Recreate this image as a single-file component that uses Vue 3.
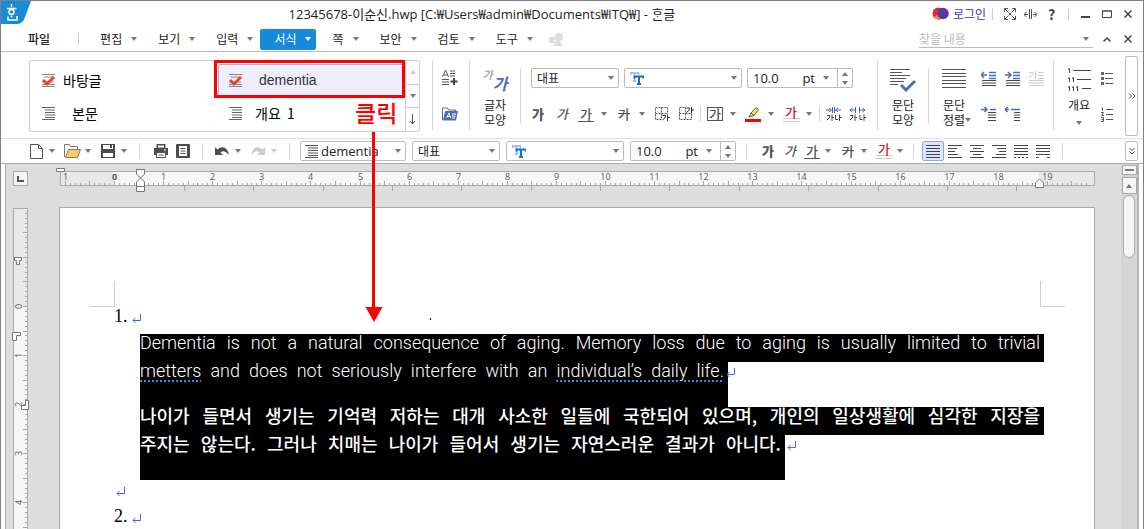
<script setup>

import { ref } from 'vue'

const keyword = ref('')
const fontSize = ref('10.0')

const menus = [
  { name: '편집' },
  { name: '보기' },
  { name: '입력' },
  { name: '서식', active: true },
  { name: '쪽' },
  { name: '보안' },
  { name: '검토' },
  { name: '도구' }
]

const styles = [
  { name: '바탕글', icon: 'check' },
  { name: 'dementia', icon: 'check', indent: 'deep', selected: true },
  { name: '본문', icon: 'lines', indent: 'deep' },
  { name: '개요  1', icon: 'lines', indent: 'slight' }
]

const aligns = [
  { name: '양쪽 정렬', d: 'M0 .5h14M0 3.5h14M0 6.5h14M0 9.5h14M0 12.5h14', active: true },
  { name: '왼쪽 정렬', d: 'M0 .5h14M0 3.5h9M0 6.5h7M0 9.5h10M0 12.5h14' },
  { name: '가운데 정렬', d: 'M0 .5h14M3 3.5h8M0 6.5h14M3 9.5h8M0 12.5h14' },
  { name: '오른쪽 정렬', d: 'M0 .5h14M5 3.5h9M7 6.5h7M4 9.5h10M0 12.5h14' },
  { name: '배분 정렬', d: 'M0 .5h14M0 3.5h14M0 6.5h14M0 9.5h14M0 12.5h2M4 12.5h2M8 12.5h2M12 12.5h2' },
  { name: '나눔 정렬', d: 'M0 .5h14M0 3.5h14M0 6.5h14M0 9.5h14M0 12.5h3M11 12.5h3' }
]

// ruler scale: one centimetre is 49.1px, ten ticks each
const CM = 49.1
const makeTicks = (from, to, zero) => {
  const list = []
  for (let i = from; i <= to; i++) {
    list.push({
      pos: Math.round(zero + i * CM / 10) + 0.5,
      size: i % 5 === 0 ? 4 : 2,
      label: i % 10 === 0 ? Math.abs(i / 10) : null
    })
  }
  return list
}

const hTicks = makeTicks(-10, 198, 53)
const vTicks = makeTicks(-19, 46, 97)
const tabStops = Array.from({ length: 13 }, (_, i) => Math.round(123 + i * 69.35) + 0.5)

</script>

<template>
  <div class="window">
    <header class="titlebar">
      <svg class="logo" width="31" height="23" viewBox="0 0 31 23">
        <path d="M0 0h30l-6 16q-2 7-8 7H0z" fill="#188bd8" />
        <path d="M10.500 3v3M6 7.500h9.500M7 15.500v3.500h9v-4" fill="none" stroke="#fff" stroke-width="1.500" />
        <circle cx="10.500" cy="11" r="2.500" fill="none" stroke="#fff" stroke-width="1.500" />
        <circle cx="10.500" cy="15.500" r="1" fill="#fff" />
      </svg>
      <h1 class="title">12345678-이순신.hwp [C:₩Users₩admin₩Documents₩ITQ₩] - ᄒᆞᆫ글</h1>
      <a class="login" href="#">
        <svg width="17" height="14" viewBox="0 0 17 14">
          <circle cx="6.500" cy="6.500" r="6" fill="#e8263c" />
          <path d="M2 10q3 4 8 2l-2-6z" fill="#f78c1e" />
          <circle cx="11" cy="6.500" r="5.800" fill="#5a35a8" />
        </svg>
        로그인
      </a>
      <span class="vline"></span>
      <button class="wbtn" aria-label="전체 화면">
        <svg width="12" height="12" viewBox="0 0 12 12" fill="none" stroke="#555">
          <path d="M.5 4V.5H4M8 .5h3.500V4M11.500 8v3.500H8M4 11.500H.5V8M1 1l3.500 3.500M11 1L7.500 4.500M1 11l3.500-3.500M11 11L7.500 7.500M5 5l2 2M7 5L5 7" />
        </svg>
      </button>
      <button class="wbtn" aria-label="창 맞춤">
        <svg width="13" height="10" viewBox="0 0 13 10" fill="none" stroke="#555">
          <path d="M5.500 0v10M7.500 0v10M0 5.500h4M9 5.500h4M2.500 3L0 5.500 2.500 8M10.500 3L13 5.500 10.500 8" />
        </svg>
      </button>
      <button class="wbtn help">?</button>
      <span class="vline"></span>
      <button class="wbtn" aria-label="최소화">
        <svg width="10" height="10" viewBox="0 0 10 10"><path d="M0 7h9v2H0z" fill="#444" /></svg>
      </button>
      <button class="wbtn" aria-label="최대화">
        <svg width="10" height="8" viewBox="0 0 10 8"><path d="M.5 1h9v6.500h-9zM0 1h10" fill="none" stroke="#444" /></svg>
      </button>
      <button class="wbtn" aria-label="닫기">
        <svg width="8" height="8" viewBox="0 0 8 8"><path d="M.5 .5l7 7M7.500 .5l-7 7" stroke="#444" stroke-width="1.500" /></svg>
      </button>
    </header>

    <nav class="menubar">
      <button class="file">파일</button>
      <span class="vline"></span>
      <button v-for="m in menus" :key="m.name" class="menu" :class="{ active: m.active }">
        {{ m.name }}<i class="arrow"></i>
      </button>
      <svg class="shapes" width="15" height="13" viewBox="0 0 15 13" fill="#ddd">
        <path d="M0 4h6v6H0zM9 5l5 8H4z" />
        <circle cx="10" cy="4" r="4" />
      </svg>
      <div class="search">
        <input v-model="keyword" type="text" placeholder="찾을 내용" aria-label="찾을 내용" />
        <i class="arrow"></i>
      </div>
      <button class="wbtn" aria-label="리본 접기">
        <svg width="8" height="5" viewBox="0 0 8 5"><path d="M.5 4.500L4 1l3.500 3.500" fill="none" stroke="#444" stroke-width="1.500" /></svg>
      </button>
      <button class="wbtn" aria-label="문서 닫기">
        <svg width="8" height="8" viewBox="0 0 8 8"><path d="M.5 .5l7 7M7.500 .5l-7 7" stroke="#444" stroke-width="1.500" /></svg>
      </button>
    </nav>

    <section class="ribbon">
      <div class="gallery">
        <div class="gallery-list">
          <button v-for="s in styles" :key="s.name" class="style" :class="{ selected: s.selected }">
            <svg width="13" height="13" viewBox="0 0 13 13">
              <path v-if="s.icon === 'lines'" d="M0 .5h13M3 3h10M3 5.500h10M3 8h10M3 10.500h10M0 12.500h13" stroke="#666" />
              <template v-else>
                <path d="M0 .5h13M2 3h10M0 8h12M0 12.500h13M0 10.500h13" stroke="#888" />
                <path d="M1 6l4 4 7-7" fill="none" stroke="#e2491f" stroke-width="3" />
              </template>
            </svg>
            <span class="style-name" :class="s.indent">{{ s.name }}</span>
          </button>
        </div>
        <div class="gallery-scroll">
          <button aria-label="위로"><i class="arrow up dim"></i></button>
          <button aria-label="아래로"><i class="arrow"></i></button>
          <button aria-label="더 보기">
            <svg width="7" height="11" viewBox="0 0 7 11"><path d="M3.500 0v10M1 7l2.500 3L6 7" fill="none" stroke="#555" /></svg>
          </button>
        </div>
      </div>

      <span class="sep"></span>
      <div class="pair">
        <button class="tool" aria-label="스타일 추가">
          <svg width="17" height="16" viewBox="0 0 17 16">
            <path d="M.5 7l3-7 3 7M1.500 5h4M8 1h5M8 3.500h5M8 6h5M0 9.500h7M0 12h7M0 14.500h7" fill="none" stroke="#555" />
            <path d="M12 8v7M8.500 11.500h7" stroke="#444" stroke-width="2" />
          </svg>
        </button>
        <button class="tool" aria-label="스타일 불러오기">
          <svg width="17" height="14" viewBox="0 0 17 14">
            <path d="M.5 13V1h5l1 2h7v3" fill="none" stroke="#666" />
            <path d="M3 4h13l-2 9.500H1z" fill="#4a6fb5" />
            <path d="M4.500 11L7 6l1.500 5M5 9.500h3M10 7h4M10 9h3.500M10 11h3" fill="none" stroke="#fff" />
          </svg>
        </button>
      </div>

      <span class="sep"></span>
      <button class="big">
        <span class="ga"><i class="back">가</i><i class="front">가</i></span>
        <span>글자<br />모양</span>
      </button>

      <span class="sep short"></span>
      <div class="form">
        <div class="form-row boxes">
          <label class="combo lang">
            <select aria-label="언어"><option>대표</option></select>
            <i class="arrow"></i>
          </label>
          <label class="combo font">
            <svg width="14" height="13" viewBox="0 0 14 13">
              <path d="M.5 3V1h8v2M4.500 1v8M3 9h3" fill="none" stroke="#8ab8e6" stroke-width="1.500" />
              <path d="M4.500 6.500V4.500h9v2M9 4v8M7 12h4" fill="none" stroke="#1a6fc4" stroke-width="2" />
            </svg>
            <select aria-label="글꼴"><option></option></select>
            <i class="arrow"></i>
          </label>
          <div class="combo size">
            <input v-model="fontSize" type="text" aria-label="글자 크기" />
            <span>pt</span>
            <i class="arrow"></i>
            <span class="spin">
              <button aria-label="크게"><i class="arrow up"></i></button>
              <button aria-label="작게"><i class="arrow"></i></button>
            </span>
          </div>
        </div>
        <div class="form-row glyphs">
          <button class="tool g bold">가</button>
          <button class="tool g italic">가</button>
          <button class="tool g"><u>가</u></button>
          <button class="drop" aria-label="밑줄 모양"><i class="arrow"></i></button>
          <button class="tool g"><s>가</s></button>
          <button class="drop" aria-label="취소선 모양"><i class="arrow"></i></button>
          <button class="tool" aria-label="아래 첨자">
            <svg width="15" height="14" viewBox="0 0 15 14">
              <path d="M.5 .5h12v12H.5zM6.500 .5v12M.5 6.500h12" fill="none" stroke="#555" stroke-dasharray="2 1" />
              <path d="M7 7h8v7H7z" fill="#fff" />
              <path d="M7.500 8.500h3q0 3-3 4.500M12.500 7.500V14M12.500 10.500H15" fill="none" stroke="#333" />
            </svg>
          </button>
          <button class="tool" aria-label="위 첨자">
            <svg width="15" height="14" viewBox="0 0 15 14">
              <path d="M.5 .5h12v12H.5zM6.500 .5v12M.5 6.500h12" fill="none" stroke="#555" stroke-dasharray="2 1" />
              <path d="M7 0h8v6H7z" fill="#fff" />
              <path d="M7.500 1h3q0 3-3 4.500M12.500 0v6M12.500 3H15" fill="none" stroke="#333" />
            </svg>
          </button>
          <span class="mini"></span>
          <button class="tool g"><span class="boxed">가</span></button>
          <button class="drop" aria-label="글자 테두리"><i class="arrow"></i></button>
          <button class="tool" aria-label="형광펜">
            <svg width="16" height="15" viewBox="0 0 16 15">
              <path d="M6 6l5-5.500 2.500 2L9 8.500zM6 6l-2 4 5-1.500" fill="#ffe94d" stroke="#555" />
              <path d="M0 12h16v3H0z" fill="#f00" />
            </svg>
          </button>
          <button class="drop" aria-label="형광펜 색"><i class="arrow"></i></button>
          <button class="tool g"><span class="color">가</span></button>
          <button class="drop" aria-label="글자 색"><i class="arrow"></i></button>
          <span class="mini"></span>
          <button class="tool" aria-label="자간 줄이기">
            <svg width="16" height="14" viewBox="0 0 16 14">
              <path d="M6.500 0v6M8.500 0v6M0 3h5M10 3h5M3 1l2.500 2L3 5M12 1L9.500 3 12 5" fill="none" stroke="#3f66b0" />
              <path d="M1 8.500h3q0 3-3 4.500M6 7.500V14M6 10.500h2M9.500 8v4.500H12M13.500 7.500V14M13.500 10.500h2" fill="none" stroke="#444" />
            </svg>
          </button>
          <button class="tool" aria-label="자간 늘리기">
            <svg width="16" height="14" viewBox="0 0 16 14">
              <path d="M5.500 0v6M9.500 0v6M0 3h5M10 3h5M2.500 1L0 3l2.500 2M12.500 1L15 3l-2.500 2" fill="none" stroke="#3f66b0" />
              <path d="M0 8.500h3q0 3-3 4.500M5 7.500V14M5 10.500h2M10 8v4.500h2.500M14 7.500V14M14 10.500h2" fill="none" stroke="#444" />
            </svg>
          </button>
        </div>
      </div>

      <span class="sep"></span>
      <button class="big">
        <svg width="27" height="26" viewBox="0 0 27 26">
          <path d="M0 1.500h20M0 4.500h12M0 7.500h20M0 10.500h16M0 13.500h14M0 16.500h8" stroke="#555" />
          <path d="M11 17l5 5 9-9" fill="none" stroke="#4a6fb5" stroke-width="3" />
        </svg>
        <span>문단<br />모양</span>
      </button>

      <span class="sep short"></span>
      <button class="big">
        <svg width="24" height="26" viewBox="0 0 24 26">
          <path d="M0 1.500h24M0 5.500h24M0 8.500h24M0 12.500h24M0 15.500h24M0 19.500h24" stroke="#555" />
        </svg>
        <span>문단<br />정렬<i class="arrow"></i></span>
      </button>
      <div class="indents">
        <button class="tool" aria-label="왼쪽 여백 줄이기">
          <svg width="15" height="15" viewBox="0 0 15 15">
            <path d="M8 1.500h7M8 4.500h7M8 7.500h7M0 4h6M3 1L0 4l3 3" fill="none" stroke="#4a6fb5" stroke-width="1.500" />
            <path d="M1 9.500h14M1 12h14M1 14.500h14" stroke="#444" />
          </svg>
        </button>
        <button class="tool" aria-label="왼쪽 여백 늘리기">
          <svg width="15" height="15" viewBox="0 0 15 15">
            <path d="M8 1.500h7M8 4.500h7M8 7.500h7M0 4h6M3 1l3 3-3 3" fill="none" stroke="#4a6fb5" stroke-width="1.500" />
            <path d="M1 9.500h14M1 12h14M1 14.500h14" stroke="#444" />
          </svg>
        </button>
        <button class="tool" aria-label="문단 첫 글자 장식">
          <svg width="15" height="15" viewBox="0 0 15 15">
            <path d="M0 1.500h4q0 3-4 5.500M6.500 0v8M6.500 4H8M9 1.500h6M9 4.500h6M9 7.500h6M0 9.500h15M0 12h15M0 14.500h15" fill="none" stroke="#ccc" />
          </svg>
        </button>
        <button class="tool" aria-label="첫 줄 들여쓰기">
          <svg width="15" height="15" viewBox="0 0 15 15">
            <path d="M9 2.500h6M0 2.500h6M3.500 0L6 2.500 3.500 5" fill="none" stroke="#4a6fb5" stroke-width="1.500" />
            <path d="M7 5.500h8M7 8h8M7 10.500h8M7 13.500h8" stroke="#444" />
          </svg>
        </button>
        <button class="tool" aria-label="첫 줄 내어쓰기">
          <svg width="15" height="15" viewBox="0 0 15 15">
            <path d="M6 2.500h9M0 2.500h4M2.500 0L0 2.500 2.500 5" fill="none" stroke="#4a6fb5" stroke-width="1.500" />
            <path d="M9 5.500h6M9 8h6M9 10.500h6M9 13.500h6" stroke="#444" />
          </svg>
        </button>
      </div>

      <span class="sep"></span>
      <button class="big outline">
        <svg width="23" height="26" viewBox="0 0 23 26" fill="none" stroke="#444">
          <path d="M5 2.500h18M9 11.500h14M14 20.500h9M0 1.500l1.500-1V5M0 10.500l1.500-1V14M4 10.500l1.500-1V14M0 19.500l1.500-1V23M4 19.500l1.500-1V23M8 19.500l1.500-1V23" />
        </svg>
        <span>개요</span>
        <i class="arrow"></i>
      </button>
      <div class="pair bullets">
        <button class="tool" aria-label="글머리표">
          <svg width="12" height="13" viewBox="0 0 12 13">
            <path d="M0 0h3v3H0zM0 5h3v3H0zM0 10h3v3H0z" fill="#666" />
            <path d="M4 1.500h8M4 6.500h8M4 11.500h8" stroke="#555" />
          </svg>
        </button>
        <button class="tool" aria-label="문단 번호">
          <svg width="12" height="15" viewBox="0 0 12 15" fill="none" stroke="#555">
            <path d="M5 2.500h7M5 7.500h7M5 12.500h7M.5 1h1v3M0 5.500h2.500L.5 8.500H3M0 10.500h2.500v4H0M.5 12.500h2" />
          </svg>
        </button>
      </div>
      <button class="more tall" aria-label="더 보기">
        <svg width="8" height="6" viewBox="0 0 8 6"><path d="M1 .5L3.500 3 1 5.500M4.500 .5L7 3 4.500 5.500" fill="none" stroke="#555" /></svg>
      </button>
    </section>

    <section class="toolbar">
      <button class="tool" aria-label="새 문서">
        <svg width="13" height="15" viewBox="0 0 13 15"><path d="M.5 .5h8l4 4v10H.5zM8.500 .5v4h4" fill="none" stroke="#555" /></svg>
      </button>
      <button class="drop" aria-label="새 문서 메뉴"><i class="arrow"></i></button>
      <button class="tool" aria-label="불러오기">
        <svg width="17" height="14" viewBox="0 0 17 14">
          <path d="M.5 13V.5h5l1 2h7v3" fill="none" stroke="#777" />
          <path d="M4.500 5.500h12l-3 8h-12z" fill="#f2cd73" stroke="#9a7a35" />
        </svg>
      </button>
      <button class="drop" aria-label="불러오기 메뉴"><i class="arrow"></i></button>
      <button class="tool" aria-label="저장하기">
        <svg width="14" height="14" viewBox="0 0 14 14">
          <path d="M0 0h14v14H0z" fill="#4d4d4d" />
          <path d="M2 1h10v4H2zM2 9h10v4H2z" fill="#fff" />
          <path d="M9 1h2v3H9z" fill="#4d4d4d" />
        </svg>
      </button>
      <button class="drop" aria-label="저장 메뉴"><i class="arrow"></i></button>
      <span class="sep"></span>
      <button class="tool" aria-label="인쇄">
        <svg width="14" height="14" viewBox="0 0 14 14">
          <path d="M2.500 0h9v4h-9z" fill="#4d4d4d" /><path d="M4 1.500h6v2H4z" fill="#fff" />
          <path d="M0 4h14v7H0z" fill="#4d4d4d" />
          <path d="M2.500 8.500h9v5h-9z" fill="#fff" stroke="#4d4d4d" />
          <path d="M10 6h2" stroke="#fff" /><path d="M4.500 11h5" stroke="#4d4d4d" />
        </svg>
      </button>
      <button class="tool" aria-label="미리 보기">
        <svg width="14" height="14" viewBox="0 0 14 14">
          <rect width="14" height="14" rx="1" fill="#4d4d4d" />
          <path d="M3 2h8v10H3z" fill="#fff" />
          <path d="M4.500 4.500h5M4.500 7h5M4.500 9.500h5" stroke="#4d4d4d" />
        </svg>
      </button>
      <span class="sep sm"></span>
      <button class="tool" aria-label="되돌리기">
        <svg width="15" height="10" viewBox="0 0 15 10">
          <path d="M0 1v8h8L5.500 6.500Q9 3 14 9 12 0 6 1.500 4 2 2.500 3.500z" fill="#4d4d4d" />
        </svg>
      </button>
      <button class="drop" aria-label="되돌리기 목록"><i class="arrow"></i></button>
      <button class="tool" aria-label="다시 실행">
        <svg width="15" height="10" viewBox="0 0 15 10">
          <path d="M14 1v8H6l2.500-2.500Q5 3 0 9 2 0 8 1.500q2 .5 3.500 2z" fill="#ccc" />
        </svg>
      </button>
      <button class="drop" aria-label="다시 실행 목록"><i class="arrow dim"></i></button>
      <span class="sep"></span>
      <div class="boxes">
        <label class="combo size styles">
          <svg width="13" height="13" viewBox="0 0 13 13">
            <path d="M0 .5h13M3 3h10M3 5.500h10M3 8h10M3 10.500h10M0 12.500h13" stroke="#555" />
          </svg>
          <select aria-label="스타일"><option>dementia</option></select>
          <i class="arrow"></i>
        </label>
        <label class="combo lang">
          <select aria-label="언어"><option>대표</option></select>
          <i class="arrow"></i>
        </label>
        <label class="combo font">
          <svg width="14" height="13" viewBox="0 0 14 13">
            <path d="M.5 3V1h8v2M4.500 1v8M3 9h3" fill="none" stroke="#8ab8e6" stroke-width="1.500" />
            <path d="M4.500 6.500V4.500h9v2M9 4v8M7 12h4" fill="none" stroke="#1a6fc4" stroke-width="2" />
          </svg>
          <select aria-label="글꼴"><option></option></select>
          <i class="arrow"></i>
        </label>
        <div class="combo size">
          <input v-model="fontSize" type="text" aria-label="글자 크기" />
          <span>pt</span>
          <i class="arrow"></i>
          <span class="spin">
            <button aria-label="크게"><i class="arrow up"></i></button>
            <button aria-label="작게"><i class="arrow"></i></button>
          </span>
        </div>
      </div>
      <span class="sep"></span>
      <button class="tool g bold">가</button>
      <button class="tool g italic">가</button>
      <button class="tool g"><u>가</u></button>
      <button class="drop" aria-label="밑줄 모양"><i class="arrow"></i></button>
      <button class="tool g"><s>가</s></button>
      <button class="drop" aria-label="취소선 모양"><i class="arrow"></i></button>
      <button class="tool g"><span class="color">가</span></button>
      <button class="drop" aria-label="글자 색"><i class="arrow"></i></button>
      <span class="sep sm"></span>
      <button v-for="a in aligns" :key="a.name" class="tool align" :class="{ active: a.active }" :aria-label="a.name">
        <svg width="14" height="13" viewBox="0 0 14 13"><path :d="a.d" stroke="#444" /></svg>
      </button>
      <span class="sep sm"></span>
      <button class="more" aria-label="도구 더 보기">
        <svg width="6" height="8" viewBox="0 0 6 8"><path d="M.5 1L3 3.500 5.500 1M.5 4.500L3 7l2.500-2.500" fill="none" stroke="#444" /></svg>
      </button>
    </section>

    <main class="workspace">
      <div class="left">
        <button class="tab-kind" aria-label="탭 종류">
          <svg width="7" height="6" viewBox="0 0 7 6"><path d="M1 0v5h6" fill="none" stroke="#555" stroke-width="2" /></svg>
        </button>
        <div class="vruler">
          <svg width="13" height="325" viewBox="0 0 13 325">
            <path d="M0 97h13v228H0z" fill="#f7f7f7" />
            <template v-for="t in vTicks" :key="t.pos">
              <path :d="`M${13 - t.size} ${t.pos}h${t.size}`" stroke="#aaa" />
              <text v-if="t.label !== null && t.pos > 90" class="num" text-anchor="middle" :transform="`translate(8 ${t.pos}) rotate(-90)`">{{ t.label }}</text>
            </template>
            <g fill="#fff" stroke="#777">
              <path d="M.5 48.500h7v3h-2v4h-3v-4h-2z" />
              <path d="M-1.500 123.500h8v3h-4v5h-4z" />
              <path d="M11.500 191.500h3v9h-7v-4h4z" />
            </g>
          </svg>
        </div>
      </div>

      <div class="center">
        <div class="hruler">
          <svg width="100%" height="13">
            <rect x="53" width="925" height="13" fill="#f7f7f7" />
            <template v-for="t in hTicks" :key="t.pos">
              <path :d="`M${t.pos} ${13 - t.size}v${t.size}`" stroke="#aaa" />
              <text v-if="t.label !== null" class="num" :class="{ zero: t.label === 0 }" :x="t.pos" y="8" text-anchor="middle">{{ t.label }}</text>
            </template>
            <path v-for="x in tabStops" :key="x" :d="`M${x} 14v5`" stroke="#aaa" />
            <g fill="#fff" stroke="#777">
              <path d="M-4.500-3.500h8v3h-8z" />
              <path d="M75.500-2.500h8V2l-4 4-4-4zM75.500 14.500V10l4-4 4 4v4.500zM75.500 14.500h8v5h-8z" />
              <path d="M974.500 15.500V11l4-4 4 4v4.500z" />
            </g>
          </svg>
        </div>

        <article class="page">
          <div class="corners"><i></i><i></i></div>
          <p class="num-line">
            1.
            <svg class="ret" width="9" height="9" viewBox="0 0 9 9"><path d="M8.500 0v6.500H1M3.500 4L1 6.500 3.500 9" fill="none" stroke="#3a66e0" /></svg>
            <span class="speck"></span>
          </p>
          <div class="selection en">
            <p class="line">Dementia is not a natural consequence of aging. Memory loss due to aging is usually limited to trivial</p>
            <div class="last-line">
              <p class="line end"><em>metters</em> and does not seriously interfere with an <em>individual’s daily life.</em></p>
              <svg class="ret" width="9" height="9" viewBox="0 0 9 9"><path d="M8.500 0v6.500H1M3.500 4L1 6.500 3.500 9" fill="none" stroke="#3a66e0" /></svg>
            </div>
          </div>
          <div class="selection ko">
            <p class="line">나이가 들면서 생기는 기억력 저하는 대개 사소한 일들에 국한되어 있으며, 개인의 일상생활에 심각한 지장을</p>
            <div class="last-line">
              <p class="line end">주지는 않는다. 그러나 치매는 나이가 들어서 생기는 자연스러운 결과가 아니다.</p>
              <svg class="ret" width="9" height="9" viewBox="0 0 9 9"><path d="M8.500 0v6.500H1M3.500 4L1 6.500 3.500 9" fill="none" stroke="#3a66e0" /></svg>
            </div>
          </div>
          <p class="num-line empty">
            <svg class="ret" width="9" height="9" viewBox="0 0 9 9"><path d="M8.500 0v6.500H1M3.500 4L1 6.500 3.500 9" fill="none" stroke="#3a66e0" /></svg>
          </p>
          <p class="num-line">
            2.
            <svg class="ret" width="9" height="9" viewBox="0 0 9 9"><path d="M8.500 0v6.500H1M3.500 4L1 6.500 3.500 9" fill="none" stroke="#3a66e0" /></svg>
          </p>
        </article>
      </div>

      <div class="scroll">
        <button class="split" aria-label="화면 나누기"></button>
        <button class="up-btn" aria-label="위로 이동"><i class="arrow up"></i></button>
        <div class="thumb"></div>
      </div>
    </main>

    <div class="callout">
      <div class="callout-box"></div>
      <strong>클릭</strong>
      <svg width="18" height="190" viewBox="0 0 18 190"><path d="M7 0h3v175h7.500L9 190 .5 175H7z" fill="#f00" /></svg>
    </div>
  </div>
</template>

<style>
body {
  margin: 0;
  overflow: hidden;
}
</style>

<style scoped>
.window {
  position: relative;
  box-sizing: border-box;
  display: flex;
  flex-direction: column;
  height: 100vh;
  border: 1px solid #808080;
  border-bottom: none;
  background: #fff;
  color: #222;
  font: 12px/16px "Noto Sans CJK KR", "Open Sans", sans-serif;
}

.window * {
  box-sizing: border-box;
}

svg {
  display: block;
  flex: none;
}

button {
  display: flex;
  align-items: center;
  justify-content: center;
  padding: 0;
  border: none;
  background: none;
  color: inherit;
  font: inherit;
}

input,
select {
  min-width: 0;
  padding: 0;
  border: none;
  outline: none;
  background: none;
  color: inherit;
  font: inherit;
  appearance: none;
}

p,
h1 {
  margin: 0;
}

.arrow {
  flex: none;
  width: 0;
  height: 0;
  border: 3px solid transparent;
  border-top: 4px solid #777;
  border-bottom: none;
}

.arrow.up {
  border-top: none;
  border-bottom: 4px solid #777;
}

.arrow.dim {
  border-top-color: #ccc;
}

.arrow.up.dim {
  border-bottom-color: #ccc;
}

.vline {
  width: 1px;
  height: 12px;
  background: #ccc;
}

/* title bar */
.titlebar {
  display: flex;
  align-items: center;
  height: 26px;
  padding-right: 5px;
}

.logo {
  align-self: flex-start;
}

.title {
  flex: 1;
  font-size: 13px;
  font-weight: 400;
  font-family: "Open Sans", "Noto Sans CJK KR", sans-serif;
  text-align: center;
}

.login {
  display: flex;
  align-items: center;
  gap: 4px;
  margin-right: 6px;
  color: #4436b8;
  text-decoration: none;
}

.wbtn {
  width: 21px;
  height: 20px;
}

.titlebar .vline + .wbtn {
  margin-left: 6px;
}

.help {
  font-weight: 700;
  font-size: 14px;
  color: #444;
}

.help + .vline {
  margin-left: 6px;
}

/* menus */
.menubar {
  display: flex;
  align-items: center;
  height: 25px;
  padding-right: 5px;
  border-bottom: 1px solid #bbb;
}

.file {
  margin: 0 28px 0 27px;
  font-weight: 500;
}

.menu {
  gap: 9px;
  height: 21px;
  margin-right: 2px;
  padding: 0 5px 0 14px;
}

.menubar .vline + .menu {
  margin-left: 7px;
}

.menu.active {
  border-radius: 2px;
  background: #188bd8;
  color: #fff;
}

.menu.active .arrow {
  border-top-color: #fff;
}

.shapes {
  margin-left: 9px;
}

.search {
  display: flex;
  align-items: center;
  width: 174px;
  height: 18px;
  margin: 0 3px 0 auto;
  padding-right: 4px;
  border-bottom: 1px solid #bbb;
}

.search input {
  flex: 1;
}

.search input::placeholder {
  color: #bbb;
  opacity: 1;
}

/* ribbon */
.ribbon {
  display: flex;
  align-items: flex-start;
  height: 87px;
  padding: 8px 5px 0 28px;
  border-bottom: 1px solid #e0e0e0;
}

.sep {
  align-self: center;
  width: 1px;
  height: 16px;
  margin: 0 10px;
  background: #d4d4d4;
}

.sep.sm {
  margin: 0 8px;
}

.ribbon .sep {
  align-self: flex-start;
  height: 70px;
  margin: 0 5px;
}

.ribbon .sep.short {
  height: 56px;
  margin-top: 8px;
}

.gallery {
  display: flex;
  width: 391px;
  height: 72px;
  margin-right: 7px;
  border: 1px solid #ccc;
  border-radius: 2px;
}

.gallery-list {
  flex: 1;
  display: grid;
  grid-template-columns: 1fr 1fr;
  grid-template-rows: 32px 32px;
  gap: 1px;
  padding: 3px 1px 0;
}

.style {
  justify-content: flex-start;
  gap: 8px;
  padding: 0 10px;
  border: 1px solid transparent;
  font-size: 14px;
  color: #000;
  white-space: pre;
}

.style.selected {
  border-color: #9db4e0;
  border-radius: 2px;
  background: #eeeeff;
  color: #333;
  font-family: "Liberation Sans", sans-serif;
}

.style-name.deep {
  margin-left: 9px;
}

.style-name.slight {
  margin-left: 5px;
}

.gallery-scroll {
  display: flex;
  flex-direction: column;
  width: 14px;
  border-left: 1px solid #ccc;
}

.gallery-scroll button {
  flex: 1;
}

.gallery-scroll button + button {
  border-top: 1px solid #ccc;
}

.pair {
  display: flex;
  flex-direction: column;
  gap: 16px;
  width: 26px;
  padding-top: 8px;
}

.tool {
  flex: none;
  width: 22px;
  height: 20px;
}

.ribbon .tool {
  width: 24px;
}

.ribbon .bullets,
.ribbon .bullets .tool {
  width: 16px;
}

.big {
  flex-direction: column;
  gap: 3px;
  width: 40px;
  padding-top: 8px;
  line-height: 15px;
}

.big span .arrow {
  display: inline-block;
  margin: 0 -6px 3px 0;
}

.ga {
  display: flex;
  height: 26px;
  font-weight: 700;
}

.ga .back {
  font-size: 11px;
  line-height: 12px;
  color: #aaa;
}

.ga .front {
  align-self: flex-end;
  font-size: 16px;
  line-height: 22px;
  color: #4a6fb5;
}

.form {
  width: 346px;
  padding-top: 8px;
}

.form-row,
.boxes {
  display: flex;
  align-items: center;
}

.boxes {
  gap: 6px;
}

.form-row.boxes {
  gap: 5px;
  margin: 0 0 14px 5px;
}

.combo {
  display: flex;
  align-items: center;
  height: 20px;
  padding: 0 4px 0 5px;
  border: 1px solid #bbb;
  border-radius: 2px;
  background: #fff;
}

.combo select,
.combo input {
  flex: 1;
  width: 0;
}

.combo.lang {
  width: 88px;
}

.combo.font {
  width: 118px;
}

.combo.size {
  width: 106px;
  font-size: 13px;
  font-family: "Open Sans", sans-serif;
}

.combo.size:not(.styles) {
  gap: 8px;
  padding-right: 0;
}

.combo.styles {
  gap: 3px;
  padding-left: 4px;
}

.combo .spin {
  display: flex;
  flex-direction: column;
  align-self: stretch;
  width: 15px;
  border-left: 1px solid #bbb;
}

.spin button {
  flex: 1;
}

.form-row.glyphs {
  height: 24px;
}

.drop {
  flex: none;
  width: 10px;
  height: 20px;
  margin-right: 4px;
}

.ribbon .drop {
  width: 12px;
  margin-right: 2px;
}

.drop:has(+ .sep) {
  margin-right: 0;
}

.mini {
  width: 1px;
  height: 16px;
  margin: 0 2px;
  background: #d4d4d4;
}

.g {
  font-size: 13px;
  font-weight: 500;
  color: #555;
}

.g.bold {
  font-weight: 900;
}

.g.italic {
  font-style: italic;
}

.g u {
  padding: 0 2px;
  border-bottom: 1px solid #555;
  line-height: 14px;
  text-decoration: none;
}

.boxed {
  padding: 0 1px;
  border: 1px solid #555;
  line-height: 12px;
}

.color {
  width: 17px;
  border-bottom: 4px double #ccc;
  color: #c02a2a;
  line-height: 12px;
}

.indents {
  display: grid;
  grid-template-columns: repeat(3, 24px);
  row-gap: 16px;
  margin: 8px 0 0 2px;
}

.outline .arrow {
  margin-top: 6px;
}

.more {
  width: 13px;
  height: 20px;
  margin-left: auto;
  border: 1px solid #bbb;
  border-radius: 2px;
}

.more.tall {
  height: 80px;
  margin-top: -4px;
}

/* toolbar */
.toolbar {
  display: flex;
  align-items: center;
  height: 25px;
  padding: 0 5px 0 24px;
  border-bottom: 1px solid #aaa;
}

.align.active {
  border: 1px solid #8fa9dd;
  border-radius: 2px;
  background: #dbe6fa;
}

/* document area */
.workspace {
  flex: 1;
  display: flex;
  min-height: 0;
  margin: 0 4px;
  border-left: 1px solid #aaa;
  border-right: 2px solid #b5b5b5;
  background: #ddd;
  overflow: hidden;
}

.left {
  width: 53px;
  padding: 7px 0 0 7px;
}

.tab-kind {
  width: 15px;
  height: 15px;
  border: 1px solid #aaa;
  background: #f5f5f5;
}

.vruler {
  width: 15px;
  margin-top: 22px;
  border: 1px solid #aaa;
  background: #e8e8e8;
}

.vruler svg,
.hruler svg {
  overflow: visible;
}

.num {
  font: 9px "Open Sans", sans-serif;
  fill: #555;
}

.num.zero {
  font-weight: 700;
}

.center {
  flex: 1;
  display: flex;
  flex-direction: column;
  min-width: 0;
  padding-top: 7px;
}

.hruler {
  height: 15px;
  margin-left: 1px;
  border: 1px solid #aaa;
  background: #e8e8e8;
}

.page {
  flex: 1;
  margin-top: 21px;
  padding: 73px 29px 0 30px;
  border: 1px solid #aaa;
  border-bottom: none;
  background: #fff;
}

.corners {
  display: flex;
  justify-content: space-between;
}

.corners i {
  width: 25px;
  height: 26px;
  border: 0 solid #ccc;
  border-width: 0 1px 1px 0;
}

.corners i:last-child {
  border-width: 0 0 1px 1px;
}

.num-line {
  display: flex;
  align-items: center;
  gap: 4px;
  height: 27px;
  padding: 0 0 9px 24px;
  color: #000;
  font: 18px/18px "Liberation Serif", serif;
}

.num-line .ret {
  margin-top: 4px;
}

.speck {
  width: 1px;
  height: 2px;
  margin: 6px 0 0 285px;
  background: #000;
}

.selection {
  padding: 0 21px 0 50px;
  color: #fff;
}

.line {
  padding: 0 4px 10px 0;
  background: #000;
  line-height: 18px;
  text-align: justify;
  text-align-last: justify;
  white-space: nowrap;
}

.last-line {
  display: flex;
}

.line.end {
  height: 45px;
}

.last-line .ret {
  margin: 6px 0 0 -2px;
}

.en {
  font-size: 18px;
  font-weight: 300;
  font-family: Roboto, "Liberation Sans", sans-serif;
}

.en .end {
  width: 588px;
}

.en em {
  font-style: normal;
  text-decoration: underline dotted #2a8fe8 2px;
  text-underline-offset: 3px;
}

.ko {
  font-size: 18px;
  font-weight: 500;
}

.ko .line {
  padding-bottom: 12px;
  line-height: 16px;
}

.ko .end {
  width: 645px;
}

.ko .ret {
  margin-left: 2px;
}

.empty {
  padding-left: 26px;
}

.scroll {
  display: flex;
  flex-direction: column;
  align-items: center;
  width: 16px;
  margin-left: 26px;
  padding-top: 1px;
  background: #d5d5d5;
}

.split {
  width: 15px;
  height: 10px;
  border: 1px solid #aaa;
  background: #f5f5f5;
}

.split::before {
  content: "";
  width: 9px;
  height: 2px;
  background: #777;
}

.up-btn {
  width: 15px;
  height: 17px;
  margin: 2px 0 1px;
  border: 1px solid #aaa;
  background: #f5f5f5;
}

.thumb {
  width: 12px;
  height: 63px;
  border: 1px solid #aaa;
  border-radius: 6px;
  background: #f5f5f5;
}

/* red marker drawn over the window */
.callout {
  position: absolute;
  top: 59px;
  left: 213px;
  width: 191px;
  color: #f00;
  pointer-events: none;
}

.callout-box {
  height: 38px;
  border: 3px solid #f00;
}

.callout strong {
  display: block;
  margin: 2px 0 8px 141px;
  font-size: 23px;
  font-weight: 500;
  line-height: 24px;
}

.callout svg {
  margin-left: 151px;
}
</style>
